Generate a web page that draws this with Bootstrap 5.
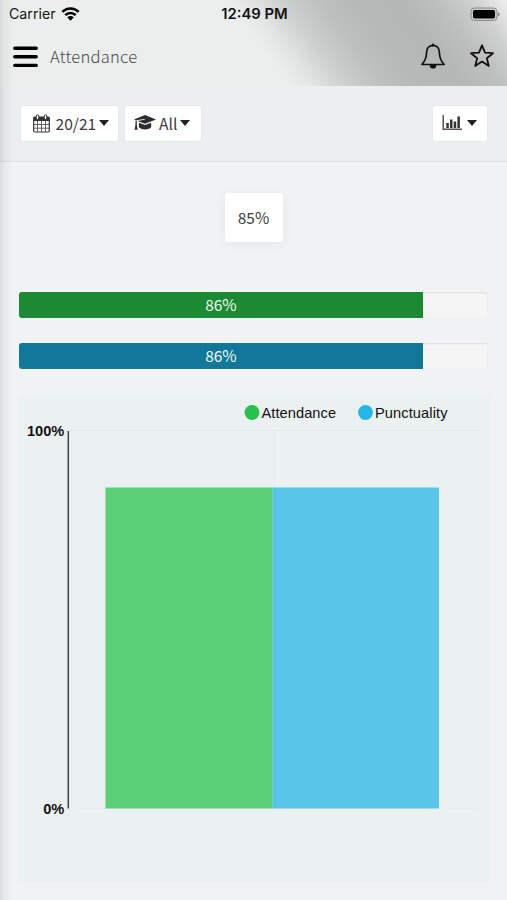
<!DOCTYPE html>
<html lang="en">
<head>
<meta charset="utf-8">
<meta name="viewport" content="width=device-width, initial-scale=1">
<title>Attendance</title>
<link href="https://cdn.jsdelivr.net/npm/bootstrap@5.3.0/dist/css/bootstrap.min.css" rel="stylesheet">
<style>
body{background:#f0f2f4;font-family:"Noto Sans CJK JP","Open Sans",sans-serif;color:#3c3c3c;height:900px;overflow:hidden}
svg{display:block;flex:none}
.edge-shade{position:absolute;left:0;top:0;width:13px;height:900px;background:linear-gradient(90deg,rgba(0,0,0,.085),rgba(0,0,0,.035) 40%,transparent);pointer-events:none}
.app-head{height:86px;background:linear-gradient(53deg,#eceeee 0,#eceeee 51%,#e2e3e3 55%,#cccdcd 61%,#bebfbf 67%,#b7b8b8 73%,#b5b6b6 81%,#bebfbf 88%,#d0d1d1 94%,#eee 100%)}
.status-row{height:28px;font-family:Inter,sans-serif;font-size:14.2px;line-height:28px;color:#161616;padding:0 7px 0 9px}
.side{flex:1 1 0}
.clock{font-weight:600;font-size:14.8px;color:#111}
.title-row{height:57px;padding:0 12px 0 13px}
.page-name{font-size:16.6px;font-weight:300;letter-spacing:.22px;line-height:24px;color:#4a4a4a;margin:-2px 0 0 12px}
.tool-strip{height:76px;background:#ebeff0;border-bottom:1px solid #dcdfe2;padding:0 19px 0 20px}
.tool-btn{height:37px;background:#fff;border:1px solid #e6e9eb;border-radius:3px;color:#3c3c3c;font-size:15.6px;line-height:24px;padding:0}
.tool-btn span{margin-top:-2px}
.score{width:58px;height:49px;margin-top:31px;padding-bottom:2px;background:#fff;border-radius:3px;box-shadow:0 2px 12px rgba(0,20,40,.055);font-size:15.5px;line-height:24px}
.meters{padding:49.500px 19px 0}
.meter{height:26px;border-radius:3px;background:#f5f5f5;box-shadow:inset 0 1px 2px rgba(0,0,0,.09);font-size:15.500px}
.meter + .meter{margin-top:25px}
.meter .progress-bar{line-height:24px;color:#eef8f2;padding-bottom:2px}
.green{background:#1c8a33}
.blue{background:#127899}
.plot{margin:26.500px 16px 0 19px;height:487px;background:#ebf0f1}
.plot text{font-family:"Liberation Sans",Arial,sans-serif;font-size:14.6px;fill:#111}
</style>
<script src="https://cdn.jsdelivr.net/npm/bootstrap@5.3.0/dist/js/bootstrap.bundle.min.js"></script>
</head>
<body class="position-relative">
<header class="app-head">
  <div class="status-row d-flex align-items-center">
    <div class="side d-flex align-items-center"><span>Carrier</span>
      <svg style="margin:-2px 0 0 5px" width="19" height="15" viewBox="0 0 20 16" fill="none" stroke="#000" stroke-width="2.7"><path d="M1.3 6.2a12.2 12.2 0 0 1 17.4 0M4.400 9.700a7.900 7.900 0 0 1 11.200 0"/><path d="M10 15.600 6.600 12.300a4.600 4.600 0 0 1 6.800 0z" fill="#000" stroke="none"/></svg>
    </div>
    <span class="clock">12:49 PM</span>
    <div class="side d-flex justify-content-end">
      <svg width="30" height="15" viewBox="0 0 30 15"><rect x="1" y="1" width="26" height="12.500" rx="3.500" fill="#c9c9c9" stroke="#8b8b8b"/><rect x="3" y="3" width="22" height="8.500" rx="1.800"/><path d="M28 5q1.600.8 1.600 2.200T28 9.500z" fill="#8b8b8b"/></svg>
    </div>
  </div>
  <div class="title-row d-flex align-items-center">
    <svg width="25" height="22" viewBox="0 0 25 22" stroke="#000" stroke-width="3.4" stroke-linecap="round"><path d="M1.8 2.2h21.4M1.8 10.8h21.4M1.8 19.4h21.4"/></svg>
    <span class="page-name">Attendance</span>
    <div class="ms-auto d-flex align-items-center" style="margin-top:-2px">
      <svg width="26" height="28" viewBox="0 0 26 28" fill="none" stroke="#111" stroke-width="1.700" stroke-linejoin="round"><path d="M13 3.500c-4.200 0-6.300 2.900-6.400 7-.1 6-1.500 8.600-4.700 12h22.200c-3.200-3.400-4.600-6-4.700-12-.1-4.100-2.200-7-6.400-7z"/><circle cx="13" cy="2.900" r="1.500" fill="#111" stroke="none"/><path d="M9.600 22.900a3.400 3.600 0 0 0 6.800 0z" fill="#111" stroke="none"/></svg>
      <svg style="margin-left:23px" width="26" height="26" viewBox="0 0 26 26" fill="none" stroke="#111" stroke-width="1.800" stroke-linejoin="round"><path d="m13 2.300 3 7.400 8 .5-6.200 5 2 7.800-6.800-4.400L6.200 23l2-7.800-6.200-5 8-.5z"/></svg>
    </div>
  </div>
</header>

<section class="tool-strip d-flex align-items-center">
  <button class="btn tool-btn d-flex align-items-center" style="width:99px" type="button">
    <svg style="margin-left:12px;margin-top:-1px" width="17" height="19" viewBox="0 0 17 19"><rect x=".7" y="3" width="15.600" height="15" rx="1.200" fill="#fff" stroke="#333" stroke-width="1.200"/><path d="M.7 3h15.600v4H.7z" fill="#333"/><path d="M4.500 7v11M8.500 7v11M12.500 7v11M1 10.500h15M1 14.200h15" stroke="#555" stroke-width=".9"/><rect x="3.200" y=".8" width="2.600" height="4.600" rx="1.300" fill="#fff" stroke="#333"/><rect x="11.200" y=".8" width="2.600" height="4.600" rx="1.300" fill="#fff" stroke="#333"/></svg>
    <span style="margin-left:5.500px">20/21</span>
    <svg style="margin:-2px 0 0 3px" width="10" height="6" viewBox="0 0 10 6"><path d="M0 0h10L5 6z" fill="#222"/></svg>
  </button>
  <button class="btn tool-btn d-flex align-items-center" style="width:78px;margin-left:5px" type="button">
    <svg style="margin:-2px 0 0 9px" width="22" height="16" viewBox="0 0 22 16" fill="#2c2c2c"><path d="M11 0 22 4.400 11 8.800 3.500 5.900 10.800 4.800 10.700 4 2 5.300 0 4.400z"/><path d="m5 7.700 6 2.400 6-2.400.3 4.100c-.8 1.800-3.400 2.700-6.300 2.700s-5.400-.9-6.200-2.700z"/><path d="M1.500 5.500h1.300v4.200l.8 5.100H.6l.9-5.100z"/></svg>
    <span style="margin-left:3px">All</span>
    <svg style="margin:-2px 0 0 3px" width="10" height="6" viewBox="0 0 10 6"><path d="M0 0h10L5 6z" fill="#222"/></svg>
  </button>
  <button class="btn tool-btn ms-auto d-flex align-items-center" style="width:56px" type="button">
    <svg style="margin:-2px 0 0 9px" width="21" height="17" viewBox="0 0 21 17"><path d="M1.200 1v14.300H20" fill="none" stroke="#555" stroke-width="1.500"/><path d="M4.300 9h2.500v5H4.300zM8 5.500h2.500V14H8zM11.700 7.500h2.500V14h-2.500zM15.400 2.500h2.500V14h-2.500z" fill="#333"/></svg>
    <svg style="margin:-2px 0 0 4px" width="10" height="6" viewBox="0 0 10 6"><path d="M0 0h10L5 6z" fill="#222"/></svg>
  </button>
</section>

<main>
  <div class="score mx-auto d-flex align-items-center justify-content-center">85%</div>
  <div class="meters">
    <div class="progress meter"><div class="progress-bar green" style="width:86.1%">86%</div></div>
    <div class="progress meter"><div class="progress-bar blue" style="width:86.1%">86%</div></div>
  </div>
  <div class="plot">
    <svg width="472" height="487" viewBox="19 395 472 487">
      <path d="M70 430.500H478" stroke="#e3e7e8"/>
      <path d="M274.500 431v57M79 808.500h27M448 808.500h30" stroke="#e7ebec"/>
      <rect x="105.500" y="487.500" width="167.200" height="321" fill="#5bcf78"/>
      <rect x="272.500" y="487.500" width="166.500" height="321" fill="#58c4e8"/>
      <path d="M68.300 431v377.500" stroke="#444" stroke-width="1.500"/>
      <circle cx="252" cy="412.500" r="7.400" fill="#27c24c"/>
      <text x="261.500" y="417.500" textLength="74.500">Attendance</text>
      <circle cx="365.500" cy="412.500" r="7.400" fill="#23b7e5"/>
      <text x="375" y="417.500" textLength="72.500">Punctuality</text>
      <text x="64.300" y="436" text-anchor="end" font-weight="bold">100%</text>
      <text x="64.300" y="813.500" text-anchor="end" font-weight="bold">0%</text>
    </svg>
  </div>
</main>
<div class="edge-shade"></div>
</body>
</html>
